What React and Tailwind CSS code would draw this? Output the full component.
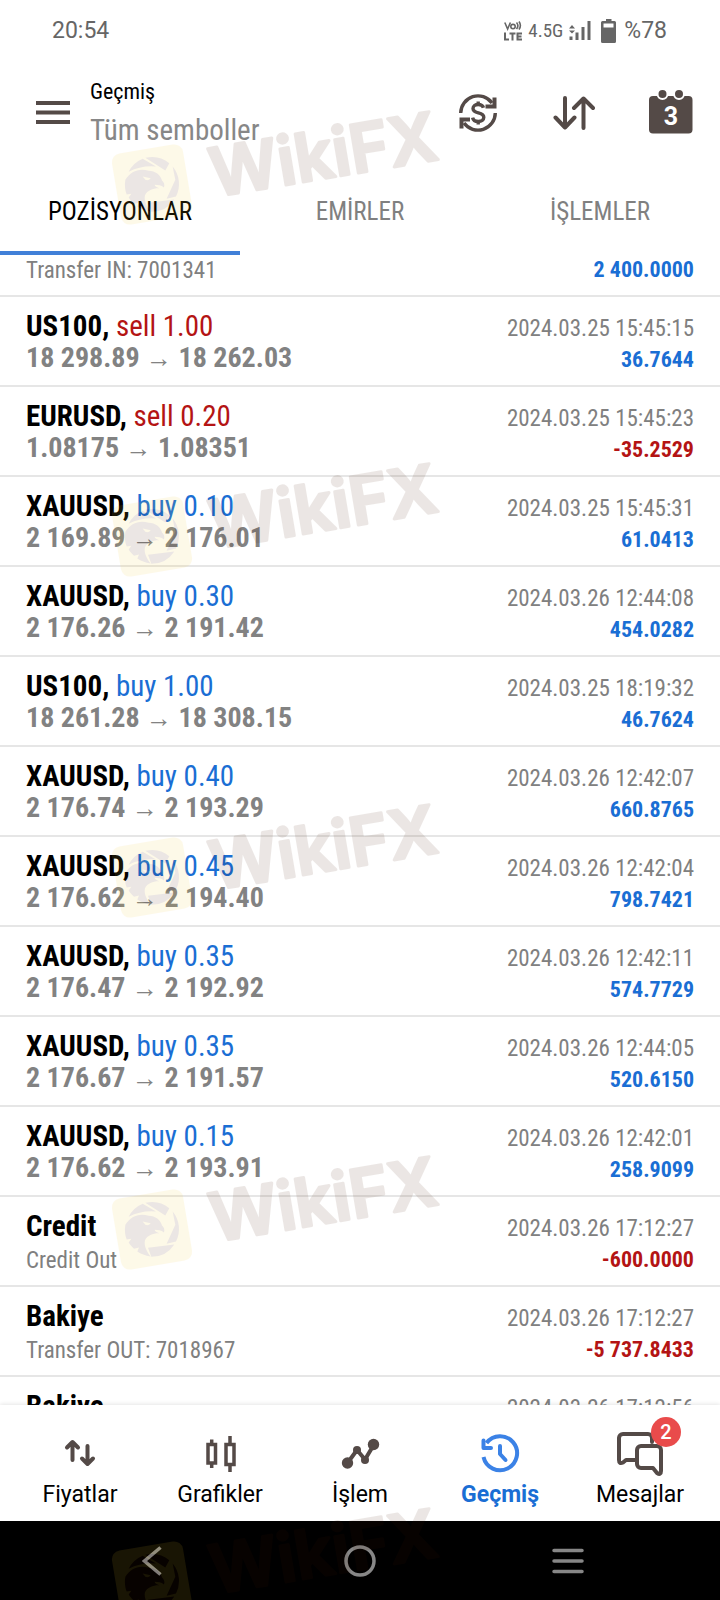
import React, { useState } from 'react';

const history = [
  { symbol: 'Bakiye', comment: 'Transfer IN: 7001341', time: '2024.03.25 15:44:58', profit: '2 400.0000' },
  { symbol: 'US100', side: 'sell', volume: '1.00', open: '18 298.89', close: '18 262.03', time: '2024.03.25 15:45:15', profit: '36.7644' },
  { symbol: 'EURUSD', side: 'sell', volume: '0.20', open: '1.08175', close: '1.08351', time: '2024.03.25 15:45:23', profit: '-35.2529' },
  { symbol: 'XAUUSD', side: 'buy', volume: '0.10', open: '2 169.89', close: '2 176.01', time: '2024.03.25 15:45:31', profit: '61.0413' },
  { symbol: 'XAUUSD', side: 'buy', volume: '0.30', open: '2 176.26', close: '2 191.42', time: '2024.03.26 12:44:08', profit: '454.0282' },
  { symbol: 'US100', side: 'buy', volume: '1.00', open: '18 261.28', close: '18 308.15', time: '2024.03.25 18:19:32', profit: '46.7624' },
  { symbol: 'XAUUSD', side: 'buy', volume: '0.40', open: '2 176.74', close: '2 193.29', time: '2024.03.26 12:42:07', profit: '660.8765' },
  { symbol: 'XAUUSD', side: 'buy', volume: '0.45', open: '2 176.62', close: '2 194.40', time: '2024.03.26 12:42:04', profit: '798.7421' },
  { symbol: 'XAUUSD', side: 'buy', volume: '0.35', open: '2 176.47', close: '2 192.92', time: '2024.03.26 12:42:11', profit: '574.7729' },
  { symbol: 'XAUUSD', side: 'buy', volume: '0.35', open: '2 176.67', close: '2 191.57', time: '2024.03.26 12:44:05', profit: '520.6150' },
  { symbol: 'XAUUSD', side: 'buy', volume: '0.15', open: '2 176.62', close: '2 193.91', time: '2024.03.26 12:42:01', profit: '258.9099' },
  { symbol: 'Credit', comment: 'Credit Out', time: '2024.03.26 17:12:27', profit: '-600.0000' },
  { symbol: 'Bakiye', comment: 'Transfer OUT: 7018967', time: '2024.03.26 17:12:27', profit: '-5 737.8433' },
  { symbol: 'Bakiye', time: '2024.03.26 17:12:56' },
];

const tabs = ['POZİSYONLAR', 'EMİRLER', 'İŞLEMLER'];

const StatusBar = () => (
  <div className="flex h-[62px] shrink-0 items-center justify-between pr-[53px] pl-[52px] font-['Roboto',sans-serif] text-[23px] text-[#666]">
    <span>20:54</span>
    <div className="flex items-center">
      <svg viewBox="0 0 18 20" className="h-5 w-[18px]" fill="none" stroke="currentColor" strokeWidth="2">
        <path d="M.8 1.5 3.6 8l2.8-6.5M12.500 1.500a5 5 0 0 1 0 6.500M15 .5a7 7 0 0 1 0 8" strokeWidth="1.6" />
        <circle cx="9" cy="5.6" r="2.2" strokeWidth="1.6" />
        <path d="M1 11.5V18.500h4M5.500 12.500h6M8.500 12.500V19.500M18 12.500h-4.500v6H18M13.500 15.500H17.500" />
      </svg>
      <span className="ml-1.5 font-['Roboto_Condensed',sans-serif] text-[19px]">4.5G</span>
      <svg viewBox="0 0 22 20" className="ml-1.5 h-5 w-[22px]" fill="currentColor">
        <path d="M0 7.500 3 4l3 3.500ZM0 9.500h6L3 12.500Z" />
        <path d="M.5 15.500h3V19h-3ZM6.500 11.500h3V19h-3ZM12.500 6h3v13h-3ZM18.500 0h3v19h-3Z" />
      </svg>
      <svg viewBox="0 0 15 24" className="ml-2.5 h-6 w-[15px]" fill="currentColor">
        <path fillRule="evenodd" d="M5 0h5.500v2H13.500a1.500 1.500 0 0 1 1.500 1.500V22.500a1.500 1.500 0 0 1-1.500 1.500H1.500A1.500 1.500 0 0 1 0 22.500V3.500A1.500 1.500 0 0 1 1.500 2H5ZM2.500 4.500V8.500h10V4.500Z" />
      </svg>
      <span className="ml-2">%78</span>
    </div>
  </div>
);

const Header = () => (
  <header className="flex h-[102px] shrink-0 items-center pr-[27px] pl-9 text-[#544a47]">
    <button aria-label="Menü">
      <svg viewBox="0 0 34 24" className="h-6 w-[34px]" fill="currentColor">
        <path d="M0 0h34v4H0ZM0 9.500h34v4H0ZM0 19h34v4H0Z" />
      </svg>
    </button>
    <div className="ml-5 flex-1 pb-0.5">
      <h1 className="text-[22px] leading-9 text-black">Geçmiş</h1>
      <p className="text-[29px] leading-10 text-[#878787]">Tüm semboller</p>
    </div>
    <div className="flex items-center">
      <button aria-label="Para birimi">
        <svg viewBox="0 0 38 38" className="size-[38px]" fill="none" stroke="currentColor" strokeWidth="3.400">
          <path d="M1.700 19A17.300 17.300 0 0 1 33 9M36.300 19A17.300 17.300 0 0 1 5 29" />
          <path d="M35.500 3.500V12.500H26.500M2.500 34.500V25.500H11" strokeWidth="4" />
          <path d="M24.500 13.800c-.6-2-2.600-3.300-5.300-3.300-3 0-5.200 1.600-5.200 4.100 0 6 10.800 2.700 10.800 8.700 0 2.600-2.300 4.200-5.500 4.200-3 0-5.200-1.400-5.700-3.900M19.200 7.500v3.500M19.200 27v3.500" />
        </svg>
      </button>
      <button aria-label="Sırala" className="ml-14">
        <svg viewBox="0 0 42 34" className="h-[34px] w-[42px]" fill="none" stroke="currentColor" strokeWidth="4" strokeLinecap="round" strokeLinejoin="round">
          <path d="M12 2v29.500M2.500 21.500 12 31.500l9.500-10M30.500 32V2.500M21 12l9.500-9.500L40 12" />
        </svg>
      </button>
      <button aria-label="Tarih" className="relative ml-[54px]">
        <svg viewBox="0 0 44 44" className="size-11 overflow-visible" fill="currentColor">
          <rect x="0" y="5" width="43.500" height="37.500" rx="4" />
          <g stroke="#fff" strokeWidth="2">
            <circle cx="13.500" cy="3" r="5" />
            <circle cx="30" cy="3" r="5" />
          </g>
        </svg>
        <span className="absolute inset-0 pt-1 text-center font-['Roboto',sans-serif] text-[25px] leading-11 font-bold text-white">3</span>
      </button>
    </div>
  </header>
);

const HistoryRow = ({ item }) => {
  const negative = item.profit && item.profit.startsWith('-');

  return (
    <li className="h-[90px] border-b-2 border-[#e6e6e6] px-[26px] pt-[13px]">
      <div className="flex h-8 items-start justify-between">
        <span className="text-[29px] leading-8 font-bold text-black">
          {item.symbol}
          {item.side && (
            <>
              ,{' '}
              <span className={item.side === 'sell' ? 'font-normal text-[#b41414]' : 'font-normal text-[#1a6ed4]'}>
                {item.side} {item.volume}
              </span>
            </>
          )}
        </span>
        <time className="text-[23px] leading-[38px] text-[#808080]">{item.time}</time>
      </div>
      <div className="flex h-8 items-start justify-between">
        {item.side ? (
          <span className="text-[28px] leading-8 font-bold text-[#828282]">
            {item.open} <span className="font-['Liberation_Serif',serif] text-[26px] leading-none">→</span> {item.close}
          </span>
        ) : (
          <span className="text-[23px] leading-[38px] text-[#808080]">{item.comment}</span>
        )}
        <span className={`text-[22px] leading-9 font-bold ${negative ? 'text-[#b41414]' : 'text-[#1a6ed4]'}`}>
          {item.profit}
        </span>
      </div>
    </li>
  );
};

const NavItem = ({ label, active, badge, children }) => (
  <button
    className={`flex flex-1 flex-col items-center text-[23px] ${active ? 'font-bold text-[#1a6ed4]' : 'text-black'}`}
  >
    <span className={`relative size-12 ${active ? 'text-[#3b82e6]' : 'text-[#544a47]'}`}>
      <svg viewBox="0 0 48 48" className="size-12 overflow-visible" fill="none" stroke="currentColor" strokeWidth="4" strokeLinecap="round" strokeLinejoin="round">
        {children}
      </svg>
      {badge && (
        <span className="absolute -top-3 left-[35px] size-[30px] rounded-full bg-[#e94b4b] text-center text-xl leading-[30px] font-medium text-white">
          {badge}
        </span>
      )}
    </span>
    <span className="mt-0.5 leading-8">{label}</span>
  </button>
);

const BottomNav = () => (
  <nav className="flex shrink-0 bg-white px-2.5 pt-6 pb-2.5 font-['Roboto',sans-serif] shadow-[0_-1px_4px_rgba(0,0,0,0.1)]">
    <NavItem label="Fiyatlar">
      <path d="M16.500 31V14M11 18.500l5.500-5.500 5.500 5.500M31.500 17v17M26 29.500l5.500 5.500 5.500-5.500" />
    </NavItem>
    <NavItem label="Grafikler">
      <g strokeLinecap="butt" strokeLinejoin="miter" strokeWidth="3.500">
        <path d="M12 15.500h7.500v18.500H12ZM15.700 10.500v5M15.700 34v5M30 15.500h8v20H30ZM34 7v8M34 36v7" />
      </g>
    </NavItem>
    <NavItem label="İşlem">
      <path d="M11.500 34 21 21l8 9.500 9-15" />
      <g fill="currentColor" stroke="none">
        <circle cx="11.500" cy="34" r="5.700" />
        <circle cx="21" cy="21" r="4" />
        <circle cx="29" cy="31" r="4" />
        <circle cx="37.500" cy="15.500" r="5.700" />
      </g>
    </NavItem>
    <NavItem label="Geçmiş" active>
      <path d="M7.500 28A17 17 0 1 0 10.500 14" strokeLinecap="butt" />
      <path d="M7.500 11.500V19H15M24 17v8l5.500 6" />
    </NavItem>
    <NavItem label="Mesajlar" badge="2">
      <path d="M36 13V9A4 4 0 0 0 32 5H7A4 4 0 0 0 3 9V31q0 4.500 4 2.500l3-2.500H20" />
      <path d="M25 17H41a4 4 0 0 1 4 4V42q0 4.500-4 2l-4-5H25a4 4 0 0 1-4-4V21a4 4 0 0 1 4-4Z" />
    </NavItem>
  </nav>
);

const SystemNav = () => (
  <div className="flex h-[79px] shrink-0 items-center bg-black px-12 text-[#878787]">
    <button aria-label="Geri" className="flex flex-1 justify-center">
      <svg viewBox="0 0 20 30" className="h-[30px] w-5" fill="none" stroke="currentColor" strokeWidth="3.500">
        <path d="M18.500 1.500 2.500 15l16 13.500" />
      </svg>
    </button>
    <button aria-label="Ana ekran" className="flex flex-1 justify-center">
      <svg viewBox="0 0 32 32" className="size-8" fill="none" stroke="currentColor" strokeWidth="3.500">
        <circle cx="16" cy="16" r="14" />
      </svg>
    </button>
    <button aria-label="Son uygulamalar" className="flex flex-1 justify-center">
      <svg viewBox="0 0 32 26" className="h-[26px] w-8" fill="none" stroke="currentColor" strokeWidth="3.500" strokeLinecap="round">
        <path d="M2 2.500h28M2 13h28M2 23.500h28" />
      </svg>
    </button>
  </div>
);

const Watermark = ({ className }) => (
  <svg viewBox="0 0 340 140" className={`pointer-events-none absolute left-[110px] h-[140px] w-[340px] opacity-10 ${className}`}>
    <rect x="-36" y="-36" width="72" height="72" rx="9" fill="#f5c828" transform="translate(42 84.500) rotate(-9.500)" />
    <g transform="translate(42 84.500) scale(.333) translate(-142 -148)" fill="#461800">
      {/* shutter blades */}
      <path d="M72 110A82 82 0 0 1 114 71L154 94Q110 90 72 110ZM122 68A82 82 0 0 1 194 84L182 106ZM204 94A82 82 0 0 1 214 184L186 191 212 134ZM209 193A82 82 0 0 1 140 230L130 203Z" />
      {/* eagle head */}
      <path d="M62 134C78 108 104 98 132 107C152 107 168 120 172 136C178 141 181 149 178 157C170 150 160 150 150 149C151 154 156 157 164 159C148 158 128 164 121 180C117 196 126 214 138 229C122 227 108 221 98 214L103 202 88 206C82 200 76 194 72 187L80 176 66 178C61 166 59 150 62 134Z" />
      <path d="M114 124 138 129Q132 138 122 134Z" fill="#f5c828" />
    </g>
    <text
      x="0"
      y="0"
      transform="translate(104 97) rotate(-9.500)"
      fill="#461800"
      stroke="#461800"
      strokeWidth="3"
      strokeLinejoin="round"
      className="font-['Inter',sans-serif] text-[67px] font-semibold"
    >
      WikiFX
    </text>
  </svg>
);

export default function App() {
  const [activeTab, setActiveTab] = useState(0);

  return (
    <div className="relative flex h-screen flex-col overflow-hidden bg-white font-['Roboto_Condensed','Roboto',sans-serif]">
      <StatusBar />
      <Header />
      <div className="flex h-[91px] shrink-0" role="tablist">
        {tabs.map((tab, index) => (
          <button
            key={tab}
            role="tab"
            aria-selected={index === activeTab}
            onClick={() => setActiveTab(index)}
            className={`flex-1 border-b-4 pt-2 text-[25px] ${
              index === activeTab ? 'border-[#4180d8] text-black' : 'border-transparent text-[#808080]'
            }`}
          >
            {tab}
          </button>
        ))}
      </div>
      <main className="min-h-0 flex-1 overflow-hidden">
        <ul className="-mt-12">
          {history.map((item, index) => (
            <HistoryRow key={index} item={item} />
          ))}
        </ul>
      </main>
      <BottomNav />
      <SystemNav />
      <Watermark className="top-[100px]" />
      <Watermark className="top-[452px]" />
      <Watermark className="top-[793px]" />
      <Watermark className="top-[1145px]" />
      <Watermark className="top-[1497px]" />
    </div>
  );
}
